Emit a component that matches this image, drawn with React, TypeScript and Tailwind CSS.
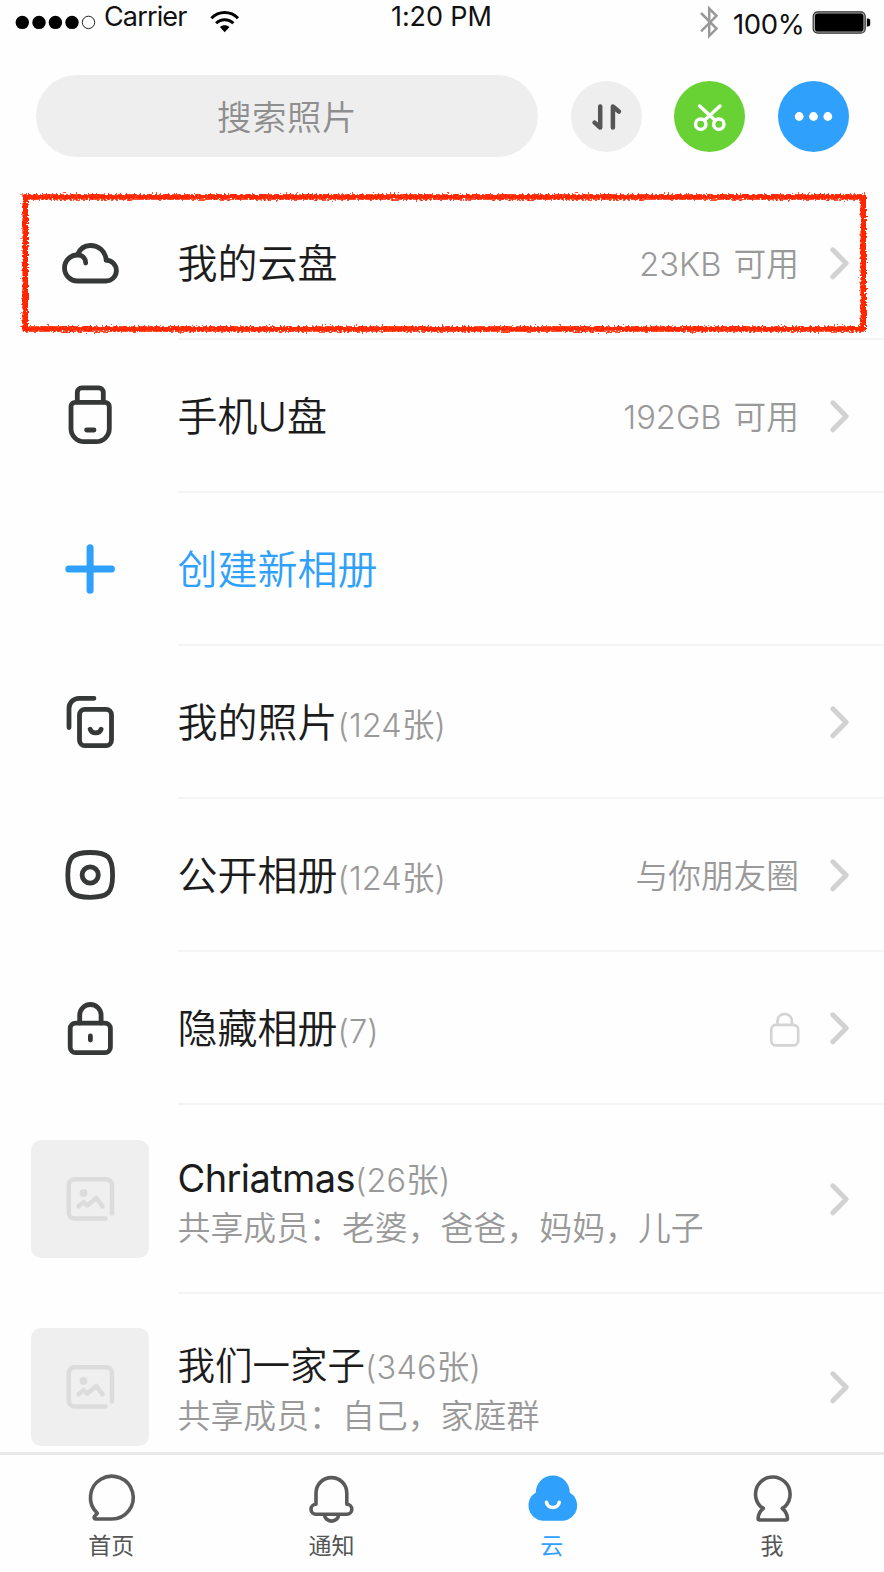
import type { ReactNode } from "react";

const LATIN_CJK = "font-['Inter','Noto_Sans_CJK_SC',sans-serif]";

function LineIcon({ children }: { children: ReactNode }) {
  return (
    <svg className="h-16 w-16" viewBox="0 0 64 64" fill="none" stroke="#363838" strokeWidth="4.8" strokeLinecap="round" strokeLinejoin="round">
      {children}
    </svg>
  );
}

const CloudIcon = () => (
  <LineIcon>
    <path d="M48.200 30.200A10.400 10.400 0 0 1 47.700 51H19.500a13 13 0 0 1 0-26c5 0 8.200 3.400 8.200 8" />
    <path d="M19.500 24.500C22 19 26.500 15.500 32.200 15.500 41 15.500 47.600 21.500 48.200 30.200" />
  </LineIcon>
);

const UsbIcon = () => (
  <LineIcon>
    <path d="M19.300 19V9.400a4.600 4.600 0 0 1 4.600-4.600h16.800a4.600 4.600 0 0 1 4.600 4.600V19" />
    <path d="M17.300 19.300H47a4.300 4.300 0 0 1 4.300 4.300v21.900a13.200 13.200 0 0 1-13.200 13.200H26.200A13.200 13.200 0 0 1 13 45.500V23.600a4.300 4.300 0 0 1 4.300-4.300z" />
    <path d="M28.600 47H36" />
  </LineIcon>
);

const PlusIcon = () => (
  <svg className="h-16 w-16" viewBox="0 0 64 64" fill="none" stroke="#2fa1fd" strokeWidth="7" strokeLinecap="round">
    <path d="M32.100 11.700V54.300M10.800 33H53.400" />
  </svg>
);

const PhotosIcon = () => (
  <LineIcon>
    <path d="M11 38.500V19.300a10 10 0 0 1 10-10H36" />
    <rect x="21.500" y="20.300" width="32" height="36.400" rx="5.500" />
    <path d="M32.200 40.200c1.500 4.800 9.400 4.800 10.900 0" />
  </LineIcon>
);

const PublicIcon = () => (
  <LineIcon>
    <path d="M32.200 10.500C50 10.500 54.600 15 54.600 32.900S50 55.300 32.200 55.300 9.800 50.700 9.800 32.900 14.400 10.500 32.200 10.500z" />
    <circle cx="32.200" cy="33" r="8.100" />
  </LineIcon>
);

const LockIcon = () => (
  <LineIcon>
    <rect x="12.200" y="28.200" width="40.200" height="29.500" rx="5.500" />
    <path d="M21.700 28V20.200a10.700 10.700 0 0 1 21.400 0V28M32.400 41v4" />
  </LineIcon>
);

const Chevron = () => (
  <svg className="h-9 w-6 shrink-0" viewBox="0 0 24 36" fill="none" stroke="#d2d2d2" strokeWidth="5" strokeLinecap="round" strokeLinejoin="round">
    <path d="M4.800 4.800 18.200 18.300 4.800 31.800" />
  </svg>
);

const SmallLock = () => (
  <svg className="-mr-px h-9 w-8" viewBox="0 0 32 36" fill="none" stroke="#d4d4d4" strokeWidth="2.700">
    <rect x="3.200" y="12.800" width="27" height="20.600" rx="5" />
    <path d="M9.500 12.500V9a7.200 7.200 0 0 1 14.400 0V12.500" />
  </svg>
);

const Thumb = () => (
  <svg className="h-[118px] w-[118px] rounded-[10px] bg-[#efefef]" viewBox="0 0 118 118" fill="none" stroke="#dcdcdc" strokeWidth="4.500" strokeLinecap="round" strokeLinejoin="round">
    <path d="M81 73.500V45a5.800 5.800 0 0 0-5.800-5.800H43.600A5.800 5.800 0 0 0 37.800 45v27.800a5.800 5.800 0 0 0 5.800 5.800H74.500" />
    <path d="M47.600 66.300 52.600 62.200 56.300 65.500 65.300 58 71.500 66.300" />
    <circle cx="52.500" cy="53" r="3.900" fill="#dcdcdc" stroke="none" />
  </svg>
);

function StatusBar() {
  return (
    <header className="flex h-[75px] items-start text-[26.500px] leading-[32px] text-[#111]">
      <svg className="ml-[15px] mt-[15px] h-[15px] w-[81px] shrink-0" viewBox="0 0 81 15">
        <circle cx="7.300" cy="7.400" r="6.700" />
        <circle cx="24" cy="7.400" r="6.700" />
        <circle cx="40.400" cy="7.400" r="6.700" />
        <circle cx="57" cy="7.400" r="6.700" />
        <circle cx="73.500" cy="7.400" r="6.200" fill="none" stroke="#222" strokeWidth="1" />
      </svg>
      <span className="ml-[8px] mt-px w-[98px] shrink-0 whitespace-nowrap text-[27px] tracking-[-0.85px]">Carrier</span>
      <svg className="ml-[8px] mt-[10px] h-[24px] w-[30px] shrink-0" viewBox="0 0 30 24" fill="none" stroke="#000" strokeWidth="3">
        <path d="M1.400 8.300C8.700.7 20.700.7 28 8.300" />
        <path d="M6.100 13.300c4.800-4.800 12.400-4.800 17.200 0" />
        <path d="M9.900 17c2.800-2.500 6.800-2.500 9.600 0l-4.800 5.300z" fill="#000" stroke="none" />
      </svg>
      <span className="ml-[151px] mt-px w-[110px] shrink-0 whitespace-nowrap text-[27px] tracking-[-0.1px]">1:20 PM</span>
      <svg className="ml-[198px] mt-[5px] h-[35px] w-[20px] shrink-0" viewBox="0 0 20 35" fill="none" stroke="#999" strokeWidth="2.500">
        <path d="M2 8 17.500 23.500 10.200 31V3.500l7.300 7.300L2 26.300" />
      </svg>
      <span className="ml-[14px] mt-[8px] w-[76px] shrink-0 whitespace-nowrap text-[27.500px] tracking-[-0.4px]">100%</span>
      <svg className="ml-[3px] mt-[11px] h-[23px] w-[59px] shrink-0" viewBox="0 0 59 23">
        <rect x="1.200" y=".8" width="52" height="21.400" rx="4.500" fill="#aaa" stroke="#333" strokeWidth="1.200" />
        <rect x="3" y="2.500" width="48.400" height="18" rx="2.800" />
        <path d="M54.800 7.500h1.200q2.200 0 2.200 2v4q0 2-2.200 2h-1.200z" />
      </svg>
    </header>
  );
}

function Toolbar() {
  return (
    <div className="flex h-[82px] items-start pl-9">
      <div className="flex h-full w-[502px] items-center justify-center rounded-full bg-[#eee] text-[34.500px] font-[350] tracking-[0.5px] text-[#8e8e8e]">
        <span className="mt-[3px]">搜索照片</span>
      </div>
      <button className="ml-[32.500px] mt-[5.500px] h-[71px] w-[71px] rounded-full bg-[#eee]">
        <svg viewBox="0 0 71 71" fill="none" stroke="#555" strokeWidth="4.500" strokeLinecap="round" strokeLinejoin="round">
          <path d="M29.200 25.500V46.500L23.600 41.600M41.900 46.500V25.500L47.900 30.500" />
        </svg>
      </button>
      <button className="ml-[32.500px] mt-[5.500px] h-[71px] w-[71px] rounded-full bg-[#68d134]">
        <svg viewBox="0 0 71 71" fill="none" stroke="#fff" strokeWidth="3.500" strokeLinecap="round">
          <circle cx="26.700" cy="43.200" r="5.200" />
          <circle cx="44.800" cy="43.200" r="5.200" />
          <path d="M46 25 30.200 39.500M25.600 25 41.400 39.500" />
        </svg>
      </button>
      <button className="ml-[32.500px] mt-[5.500px] h-[71px] w-[71px] rounded-full bg-[#2fa1fd]">
        <svg viewBox="0 0 71 71" fill="#fff">
          <circle cx="21.200" cy="35.500" r="4.400" />
          <circle cx="35.500" cy="35.500" r="4.400" />
          <circle cx="49.800" cy="35.500" r="4.400" />
        </svg>
      </button>
    </div>
  );
}

type RowProps = { icon: ReactNode; title: string; count?: string; note?: ReactNode; create?: boolean };

function Row({ icon, title, count, note, create }: RowProps) {
  return (
    <li className="flex h-[153px]">
      <div className="flex w-[178px] pl-[58px] pt-[43px]">{icon}</div>
      <div className="flex flex-1 items-center border-b-2 border-[#f4f4f4] pr-8">
        <p className={create ? "-ml-[0.500px] mt-[3px] text-[40px] font-[350] text-[#2fa1fd]" : "-ml-[0.500px] mt-[3px] text-[40px] font-[350] text-[#1c1c1c]"}>
          {title}
          {count && <span className="text-[32.500px] tracking-[0.1px] text-[#999]">{count}</span>}
        </p>
        <div className="ml-auto mr-[29px] mt-[5px] text-[32.700px] font-[350] text-[#999] [word-spacing:3px]">{note}</div>
        {!create && <Chevron />}
      </div>
    </li>
  );
}

function AlbumRow({ title, count, members, latin }: { title: string; count: string; members: string; latin?: boolean }) {
  return (
    <li className="flex h-[188.500px]">
      <div className="w-[178px] pl-[31px] pt-[34.500px]">
        <Thumb />
      </div>
      <div className="flex flex-1 items-start border-b-2 border-[#f4f4f4] pr-8">
        <div className="-ml-[0.500px] pt-[47.500px]">
          <p className={latin ? "h-[51px] text-[38px] leading-[50px] tracking-[-0.6px] text-[#1c1c1c]" : "h-[51px] text-[37.500px] font-[350] leading-[50px] text-[#1c1c1c]"}>
            {title}
            <span className="text-[32.500px] font-[350] tracking-[0.2px] text-[#999]">{count}</span>
          </p>
          <p className="h-[48px] whitespace-nowrap text-[32.900px] font-[350] leading-[48px] text-[#999]">{members}</p>
        </div>
        <div className="ml-auto pt-[75.500px]">
          <Chevron />
        </div>
      </div>
    </li>
  );
}

function Highlight() {
  return (
    <svg className="pointer-events-none absolute left-4 top-[186px] h-[154px] w-[858px]" viewBox="0 0 858 154" fill="none">
      <defs>
        <filter id="crayon" x="0" y="0" width="858" height="154" filterUnits="userSpaceOnUse">
          <feTurbulence type="fractalNoise" baseFrequency="0.5" numOctaves="2" seed="4" result="noise" />
          <feDisplacementMap in="SourceGraphic" in2="noise" scale="6.500" xChannelSelector="R" yChannelSelector="G" />
        </filter>
      </defs>
      <rect x="9.200" y="11" width="838" height="132" stroke="#ff2600" strokeWidth="5.600" filter="url(#crayon)" />
    </svg>
  );
}

function Tab({ label, active, children }: { label: string; active?: boolean; children: ReactNode }) {
  return (
    <a className={active ? "flex flex-1 flex-col items-center text-[#2fa1fd]" : "flex flex-1 flex-col items-center text-[#555]"}>
      <svg className="mt-[11px] h-[60px] w-[60px]" viewBox="0 0 60 60" fill="none" stroke="#5a5a5a" strokeWidth="3.600" strokeLinejoin="round">
        {children}
      </svg>
      <span className="mt-[3px] text-[23px] leading-[34px]">{label}</span>
    </a>
  );
}

function TabBar() {
  return (
    <nav className="flex h-[120px] shrink-0 border-t-[3px] border-[#e9e9e9] bg-[#fefefe] pl-[1px] pr-[2px]">
      <Tab label="首页">
        <path d="M30.300 53A21.400 21.400 0 1 0 16.300 47.300L13.600 50.200C12.500 51.600 13.300 53 15 53z" />
      </Tab>
      <Tab label="通知">
        <path d="M15 38.300V27a15.400 15.400 0 0 1 30.800 0V38.300a5 5 0 0 1 0 10H15a5 5 0 0 1 0-10z" />
        <path d="M23.500 48.500a7.100 6.600 0 0 0 14.200 0" />
      </Tab>
      <Tab label="云" active>
        <path d="M13.800 26.500A17 17 0 0 1 47.800 26.500 15.200 15.200 0 0 1 41.300 54.700H20.300A15.200 15.200 0 0 1 13.800 26.500z" fill="#2fa1fd" stroke="none" />
        <path d="M24.500 36.200C25.300 43.200 36.400 43.200 37.200 36.200" stroke="#fff" strokeLinecap="round" />
      </Tab>
      <Tab label="我">
        <path transform="translate(.8)" d="M20.500 42.300 17.700 40.500A17.300 17.300 0 1 1 42.300 40.500L39.500 42.300C42.500 45 44.700 49 44.700 52.500Q44.700 54 43 54H17Q15.300 54 15.300 52.500C15.300 49 17.500 45 20.500 42.300z" />
      </Tab>
    </nav>
  );
}

export default function App() {
  return (
    <div className={`relative flex h-[1572px] w-[884px] flex-col overflow-hidden bg-[#fefefe] ${LATIN_CJK}`}>
      <StatusBar />
      <Toolbar />
      <ul className="mt-[30px] h-[1265px] overflow-hidden">
        <Row icon={<CloudIcon />} title="我的云盘" note="23KB 可用" />
        <Row icon={<UsbIcon />} title="手机U盘" note="192GB 可用" />
        <Row icon={<PlusIcon />} title="创建新相册" create />
        <Row icon={<PhotosIcon />} title="我的照片" count="(124张)" />
        <Row icon={<PublicIcon />} title="公开相册" count="(124张)" note="与你朋友圈" />
        <Row icon={<LockIcon />} title="隐藏相册" count="(7)" note={<SmallLock />} />
        <AlbumRow title="Chriatmas" count="(26张)" members="共享成员：老婆，爸爸，妈妈，儿子" latin />
        <AlbumRow title="我们一家子" count="(346张)" members="共享成员：自己，家庭群" />
      </ul>
      <TabBar />
      <Highlight />
    </div>
  );
}
